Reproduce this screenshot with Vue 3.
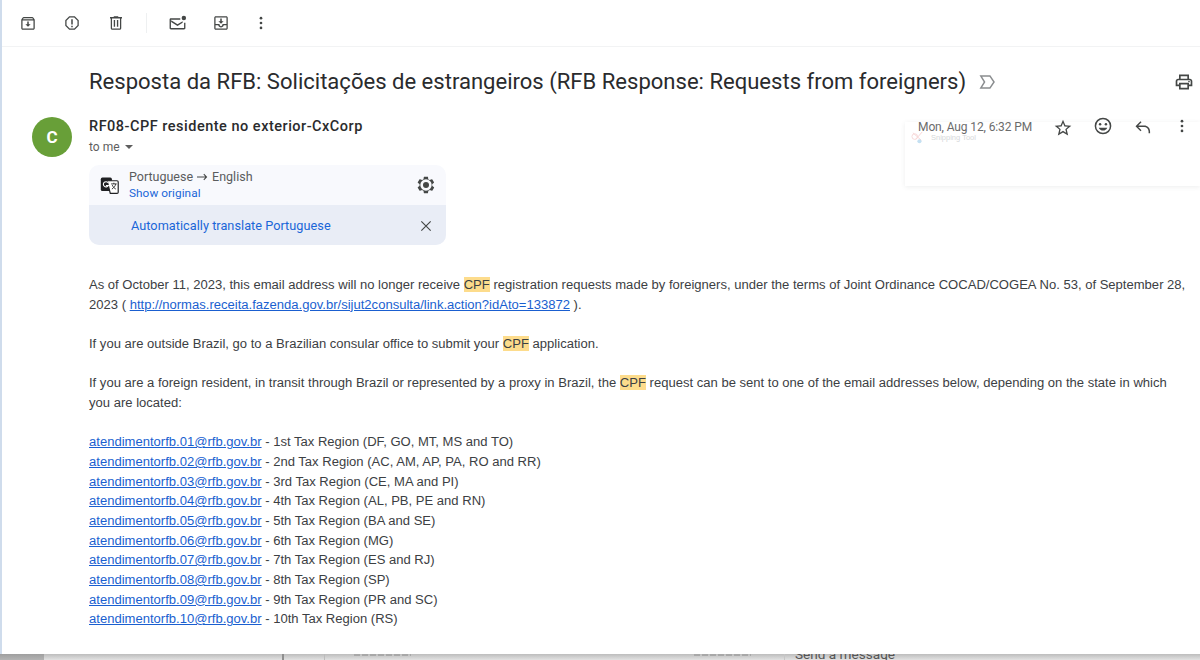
<script setup>
const regions = [
  ['01', '1st Tax Region (DF, GO, MT, MS and TO)'],
  ['02', '2nd Tax Region (AC, AM, AP, PA, RO and RR)'],
  ['03', '3rd Tax Region (CE, MA and PI)'],
  ['04', '4th Tax Region (AL, PB, PE and RN)'],
  ['05', '5th Tax Region (BA and SE)'],
  ['06', '6th Tax Region (MG)'],
  ['07', '7th Tax Region (ES and RJ)'],
  ['08', '8th Tax Region (SP)'],
  ['09', '9th Tax Region (PR and SC)'],
  ['10', '10th Tax Region (RS)'],
]
</script>

<template>
  <div class="page">
    <div class="window">
      <div class="toolbar">
        <svg class="ic" viewBox="0 0 24 24"><path d="M20.5 6.5 19 4.700c-.3-.4-.7-.7-1.200-.7H6.200c-.5 0-.9.300-1.200.7L3.500 6.500c-.3.300-.5.800-.5 1.300V19c0 1.100.9 2 2 2h14c1.100 0 2-.9 2-2V7.800c0-.5-.2-1-.5-1.300zM6.200 5.500h11.600l1 1.500H5.200zM19.300 19.300H4.700V8.700h14.600zM13 10h-2v3.500H8.500l3.500 3.500 3.500-3.500H13z"/></svg>
        <svg class="ic gap-l" viewBox="0 0 24 24"><path d="M15.700 3H8.300L3 8.300v7.400L8.300 21h7.400l5.300-5.300V8.300zM19.300 15 15 19.300H9L4.700 15V9L9 4.700h6L19.300 9zM11 7h2v7h-2zm0 8.500h2v2h-2z"/></svg>
        <svg class="ic gap-l" viewBox="0 0 24 24"><path d="M15 4V3H9v1H4v2h1v13c0 1.100.9 2 2 2h10c1.100 0 2-.9 2-2V6h1V4zm2.300 15.300H6.700V6h10.600zM9 8h1.800v9H9zm4.200 0H15v9h-1.800z"/></svg>
        <span class="sep"></span>
        <svg class="ic mail" viewBox="0 0 24 24"><path d="M2 5.500h13.500v1.700H3.700v10.600h16.600V11H22v7c0 .9-.8 1.500-1.700 1.500H3.700c-.9 0-1.700-.6-1.700-1.500V7c0-.9.8-1.500 1.700-1.500zM4 8l8 5 6.500-4v2L12 15 4 10z"/><circle cx="20" cy="5" r="2.800"/></svg>
        <svg class="ic gap-m" viewBox="0 0 24 24"><path d="M19 3H5c-1.100 0-2 .9-2 2v14c0 1.100.9 2 2 2h14c1.100 0 2-.9 2-2V5c0-1.100-.9-2-2-2zm.3 16.300H4.700V15h3.600c.5 1.700 2 3 3.700 3s3.200-1.300 3.700-3h3.600zm0-6H14c0 1.100-.9 3-2 3s-2-1.900-2-3H4.700V4.700h14.600zM13 6h-2v3.500H8.500L12 13l3.500-3.500H13z"/></svg>
        <svg class="ic gap-s" viewBox="0 0 24 24"><circle cx="12" cy="5.500" r="1.800"/><circle cx="12" cy="12" r="1.800"/><circle cx="12" cy="18.500" r="1.800"/></svg>
      </div>

      <div class="subject-row">
        <h1 class="subject">Resposta da RFB: Solicitações de estrangeiros (RFB Response: Requests from foreigners)</h1>
        <svg class="label" viewBox="0 0 24 24"><path d="M3 4h13l5.500 8-5.500 8H3l5-8zm3.200 1.800 3.900 6.200-3.900 6.200h8.900l4.200-6.200-4.200-6.200z"/></svg>
        <svg class="print" viewBox="0 0 24 24"><path d="M19 8h-1V3H6v5H5c-1.700 0-3 1.300-3 3v6h4v4h12v-4h4v-6c0-1.700-1.300-3-3-3zM8 5h8v3H8zm8 14H8v-4h8zm4-4h-2v-2H6v2H4v-4c0-.6.400-1 1-1h14c.6 0 1 .4 1 1z"/><circle cx="18" cy="11.500" r="1"/></svg>
      </div>

      <div class="message">
        <div class="avatar">C</div>
        <div class="content">
          <div class="head">
            <div>
              <div class="sender">RF08-CPF residente no exterior-CxCorp</div>
              <div class="tome">to me <span class="caret"></span></div>
            </div>
            <div class="meta">
              <span class="date">Mon, Aug 12, 6:32 PM</span>
              <svg class="ic2 star" viewBox="0 0 24 24"><path d="M22 9.200l-7.200-.6L12 2 9.200 8.600 2 9.200l5.500 4.700L5.800 21l6.200-3.700 6.200 3.700-1.700-7.100zm-10 6.200-3.800 2.300 1-4.300-3.300-2.900 4.400-.4L12 6.100l1.700 4 4.400.4-3.300 2.900 1 4.300z"/></svg>
              <svg class="ic2 smile" viewBox="0 0 24 24"><path d="M12 2a10 10 0 1 0 0 20 10 10 0 0 0 0-20zm0 18.200a8.200 8.200 0 1 1 0-16.400 8.200 8.200 0 0 1 0 16.400z"/><circle cx="8.500" cy="9.800" r="1.500"/><circle cx="15.500" cy="9.800" r="1.500"/><path d="M12 17.500c2.300 0 4.300-1.400 5.100-3.500H6.900c.8 2.100 2.800 3.500 5.100 3.500z"/></svg>
              <svg class="ic2 reply" viewBox="0 0 24 24"><path d="M20.500 19.500h-1.800v-2.200c0-3-2.300-5.300-5.300-5.300H6.300l3.900 3.900-1.200 1.200-6-6 6-6 1.200 1.200-3.900 3.900h7.100c4 0 7.100 3.100 7.100 7.100z"/></svg>
              <svg class="ic2 more" viewBox="0 0 24 24"><circle cx="12" cy="5.500" r="1.800"/><circle cx="12" cy="12" r="1.800"/><circle cx="12" cy="18.500" r="1.800"/></svg>
            </div>
          </div>

          <div class="translate">
            <div class="tr-top">
              <svg class="gt" viewBox="0 0 24 24">
                <rect x="1" y="2" width="14" height="17" rx="2" fill="#202124"/>
                <path d="M9 6h12.500c.8 0 1.500.7 1.500 1.500v13c0 .8-.7 1.500-1.500 1.500H13z" fill="#fff" stroke="#202124" stroke-width="1.500"/>
                <path d="M14 10h7M17.500 8.500V10M20 10c-.6 2.500-2.500 5-5 6.500M15.500 11.500c.8 2 2.500 4 4.500 5" fill="none" stroke="#202124" stroke-width="1.100"/>
                <path d="M10.200 8.500A3.300 3.300 0 1 0 10.500 12H7.500" fill="none" stroke="#fff" stroke-width="1.400"/>
              </svg>
              <div class="tr-text">
                <div class="tr-lang">Portuguese<svg class="arrow" viewBox="0 0 12 8"><path d="M0 3.400h9L7 1.200 7.800.5 11.200 4 7.800 7.500 7 6.800l2-2.200H0z"/></svg>English</div>
                <div class="tr-show">Show original</div>
              </div>
              <svg class="gear" viewBox="0 0 24 24"><path fill-rule="evenodd" d="M19.400 13c.1-.3.100-.7.100-1s0-.7-.1-1l2.100-1.600c.2-.2.300-.4.100-.7l-2-3.400c-.1-.3-.4-.3-.7-.3l-2.500 1c-.5-.4-1.100-.7-1.700-1L14.400 2.500c0-.3-.2-.5-.5-.5h-4c-.2 0-.4.200-.5.500L9 5c-.6.300-1.200.6-1.700 1l-2.500-1c-.3-.1-.6 0-.7.300l-2 3.400c-.1.300-.1.500.1.700L4.300 11c0 .3-.1.700-.1 1s0 .7.100 1l-2.100 1.600c-.2.200-.3.400-.1.700l2 3.400c.1.300.4.300.7.300l2.500-1c.5.400 1.100.7 1.700 1l.4 2.500c0 .3.200.5.500.5h4c.2 0 .4-.2.500-.5l.4-2.500c.6-.3 1.200-.6 1.700-1l2.500 1c.3.100.6 0 .7-.3l2-3.400c.1-.3.100-.5-.1-.7zM12 18.800A6.800 6.800 0 1 1 12 5.200a6.800 6.800 0 0 1 0 13.600z"/><circle cx="12" cy="12" r="3.600"/></svg>
            </div>
            <div class="tr-bottom">
              <span class="tr-auto">Automatically translate Portuguese</span>
              <svg class="close" viewBox="0 0 24 24"><path d="M4 4l16 16M20 4 4 20" stroke="#444746" stroke-width="2" fill="none"/></svg>
            </div>
          </div>

          <div class="body">
            <p>As of October 11, 2023, this email address will no longer receive <mark>CPF</mark> registration requests made by foreigners, under the terms of Joint Ordinance COCAD/COGEA No. 53, of September 28, 2023 ( <a href="#">http://normas.receita.fazenda.gov.br/sijut2consulta/link.action?idAto=133872</a> ).</p>
            <p>If you are outside Brazil, go to a Brazilian consular office to submit your <mark>CPF</mark> application.</p>
            <p>If you are a foreign resident, in transit through Brazil or represented by a proxy in Brazil, the <mark>CPF</mark> request can be sent to one of the email addresses below, depending on the state in which you are located:</p>
            <p>
              <span v-for="r in regions" :key="r[0]" class="region"><a href="#">atendimentorfb.{{ r[0] }}@rfb.gov.br</a> - {{ r[1] }}</span>
            </p>
          </div>
        </div>
      </div>

      <div class="snip">
        <svg class="snip-logo" viewBox="0 0 16 16"><path d="M2 3l9 8M12 2 5 10" stroke="#f6d4d4" stroke-width="1" fill="none"/><circle cx="4" cy="7" r="3" stroke="#f5d8d8" fill="none"/><circle cx="9" cy="12" r="2.200" fill="#c4e0f2"/></svg>
        <span class="snip-text">Snipping Tool</span>
      </div>
    </div>

    <div class="under">
      <span class="u-a"></span>
      <span class="u-b"></span>
      <span class="u-c"></span>
      <span class="u-ghost g1"></span>
      <span class="u-ghost g2"></span>
      <span class="u-d"></span>
      <span class="u-send">Send a message</span>
    </div>
  </div>
</template>

<style>
html, body { margin: 0; background: #fff; overflow: hidden; }
</style>

<style scoped>
.page {
  width: 1200px;
  height: 660px;
  display: flex;
  flex-direction: column;
  overflow: hidden;
  font-family: "Liberation Sans", Arial, sans-serif;
  color: #3c4043;
}
.window {
  position: relative;
  height: 654px;
  flex: none;
  overflow: hidden;
  background: #fff;
  border-left: 2px solid #cfdcec;
  box-sizing: border-box;
}
.toolbar {
  height: 47px;
  box-sizing: border-box;
  display: flex;
  align-items: center;
  padding: 0 0 0 17px;
  border-bottom: 1px solid #f2f3f4;
}
.ic { width: 18px; height: 18px; fill: #444746; flex: none; }
.gap-l { margin-left: 26px; }
.gap-m { margin-left: 25px; }
.gap-s { margin-left: 22px; }
.sep { width: 1px; height: 20px; background: #eef0f1; margin: 0 21px 0 21px; }
.mail { width: 19px; height: 19px; }
.subject-row {
  height: 69px;
  padding: 0 6px 0 87px;
  display: flex;
  align-items: center;
  box-sizing: border-box;
  position: relative;
}
.subject {
  margin: 0;
  font-family: Roboto, sans-serif;
  font-size: 22.050px;
  font-weight: 400;
  color: #2a2b2d;
  white-space: nowrap;
}
.label { width: 20px; height: 20px; fill: #8a8d8f; margin-left: 11px; flex: none; }
.print { width: 20px; height: 20px; fill: #444746; margin-left: auto; flex: none; }
.message { display: flex; padding-left: 30px; }
.avatar {
  width: 40px;
  height: 40px;
  border-radius: 50%;
  background: #689f38;
  color: #fff;
  font: 700 17px/40px Roboto, sans-serif;
  text-align: center;
  flex: none;
  margin-top: 1px;
}
.content { margin-left: 17px; flex: 1; min-width: 0; }
.head { display: flex; justify-content: space-between; height: 49px; }
.sender {
  font: 500 14.500px/20px Roboto, sans-serif;
  color: #2a2b2d;
  letter-spacing: .5px;
  white-space: nowrap;
  margin-top: 1px;
}
.tome { font: 400 12px/21px Roboto, sans-serif; color: #5e5e5e; }
.caret {
  display: inline-block;
  width: 0;
  height: 0;
  margin-left: 2px;
  vertical-align: 2px;
  border: 4px solid transparent;
  border-top: 4px solid #5e5e5e;
  border-bottom: 0;
}
.meta { display: flex; align-items: flex-start; height: 20px; padding-right: 9px; position: relative; z-index: 2; }
.date { font: 400 12px/20px Roboto, sans-serif; color: #6b6b6b; margin-right: 21px; margin-top: 1px; white-space: nowrap; letter-spacing: -.12px; }
.ic2 { width: 20px; height: 20px; fill: #444746; flex: none; }
.star { margin-top: 2px; }
.smile { margin-left: 20px; }
.reply { margin-left: 20px; margin-top: 1px; }
.more { margin-left: 20px; width: 18px; height: 18px; margin-top: 1px; }
.translate {
  width: 357px;
  border-radius: 10px;
  overflow: hidden;
  background: #f8f9fd;
}
.tr-top { height: 40px; display: flex; align-items: center; padding: 0 10px 0 11px; box-sizing: border-box; }
.gt { width: 19px; height: 19px; flex: none; }
.tr-text { margin-left: 10px; flex: 1; }
.tr-lang { font: 400 12.500px/16px Roboto, sans-serif; color: #5a5c5e; }
.arrow { width: 11px; height: 8px; fill: #444746; margin: 0 4px; }
.tr-show { font: 400 11.800px/16px Roboto, sans-serif; color: #1a66d8; letter-spacing: .05px; }
.gear { width: 20px; height: 20px; fill: #444746; flex: none; }
.tr-bottom {
  height: 40px;
  background: #e9edf6;
  display: flex;
  align-items: center;
  justify-content: space-between;
  padding: 2px 13px 0 42px;
  box-sizing: border-box;
}
.tr-auto { font: 400 12.700px/16px Roboto, sans-serif; color: #1a66d8; letter-spacing: .04px; }
.close { width: 14px; height: 14px; margin-top: -1px; }
.body {
  margin-top: 30px;
  padding-right: 12px;
  font-size: 13.060px;
  line-height: 19.660px;
  color: #3c4043;
}
.body p { margin: 0 0 19.660px; }
mark { background: #fddc8c; color: inherit; }
a { color: #1a5fd0; text-decoration: underline; }
.region { display: block; white-space: nowrap; }
.snip {
  position: absolute;
  left: 903px;
  top: 122px;
  width: 295px;
  height: 64px;
  box-sizing: border-box;
  padding: 8px 0 0 6px;
  background: #fff;
  box-shadow: 0 1px 5px rgba(60, 64, 67, .09);
  display: flex;
  align-items: flex-start;
  gap: 5px;
  z-index: 1;
}
.snip-logo { width: 15px; height: 15px; flex: none; }
.snip-text { font: 400 7.500px/11px "Liberation Sans", sans-serif; color: #d6d8da; margin-top: 2px; white-space: nowrap; }
.under {
  flex: 1;
  background: linear-gradient(#bdbdbd, #e2e2e2);
  display: flex;
  position: relative;
  overflow: hidden;
  font: 400 13.600px/12px Roboto, sans-serif;
  color: #555;
}
.u-a { width: 44px; flex: none; background: linear-gradient(#9f9f9f, #b4b4b4); }
.u-b { width: 238px; flex: none; border-right: 2px solid #8f8f8f; }
.u-c { width: 40px; flex: none; border-right: 1px solid #bcbcbc; }
.u-ghost { height: 2px; flex: none; background: repeating-linear-gradient(90deg, #a8a8a8 0 6px, transparent 6px 8px); filter: blur(.6px); }
.g1 { width: 57px; margin-left: 29px; }
.g2 { width: 57px; margin-left: 283px; }
.u-d { width: 1px; flex: none; margin-left: 33px; background: #c6c6c6; }
.u-send { margin-left: 10px; margin-top: -6px; white-space: nowrap; }
</style>
